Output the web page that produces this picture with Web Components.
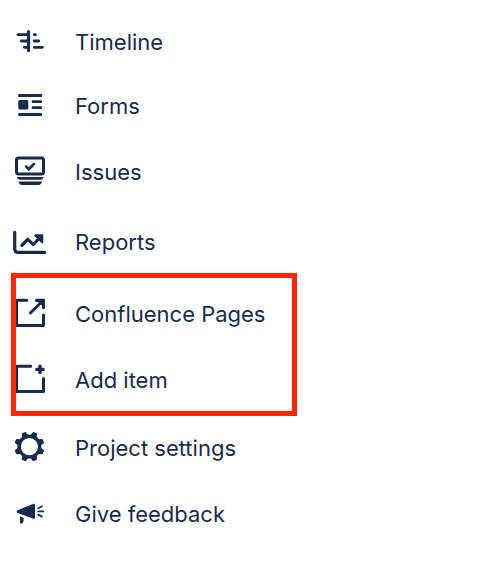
<!DOCTYPE html>
<html lang="en">
<head>
  <meta charset="utf-8">
  <meta name="viewport" content="width=device-width, initial-scale=1">
  <title>Project navigation</title>
  <style>
    body {
      margin: 0;
      background: #fff;
      color: #172b4d;
      font-family: Inter, "Liberation Sans", sans-serif;
      font-size: 22px;
    }
  </style>
</head>
<body>
  <project-nav></project-nav>

  <script>
    const icons = {
      timeline: `
        <g class="line" stroke-width="2.8">
          <path stroke-width="3.2" d="M16.5 7.5v19"/>
          <path d="M6 10.7h10M9.3 17H16M12.3 23.3H16"/>
          <path d="M22.3 10.7h1.2M22.3 17h4.5M22.3 23.3h8.1"/>
        </g>`,
      forms: `
        <rect x="6.3" y="6" width="23.7" height="3" rx=".6"/>
        <rect x="6.3" y="25" width="23.7" height="3" rx=".6"/>
        <rect x="6.3" y="12" width="10" height="9.6" rx="1.5"/>
        <rect x="19.7" y="12.2" width="10.3" height="2.8" rx="1"/>
        <rect x="19.7" y="18.2" width="10.3" height="2.8" rx="1"/>`,
      issues: `
        <rect class="line" x="4.5" y="4" width="27" height="16" rx="2" stroke-width="3"/>
        <path class="line" stroke-width="2.8" d="M14.2 12.6l2.6 2.7 5.1-5.2"/>
        <path d="M5 23h26.6q-.4 2.8-2.6 2.8H7.6Q5.4 25.8 5 23z"/>
        <path d="M6.6 27.6H30q-.6 3.4-3.4 3.4H10q-2.8 0-3.4-3.4z"/>`,
      reports: `
        <path class="line" stroke-width="3.2" d="M2.7 8.3V25q0 3.4 3.4 3.4h26.6"/>
        <path class="line" stroke-width="3.2" d="M9.9 21.4l5.8-6.1 5.6 5.2 7.2-7.5"/>
        <path d="M23.3 10.3h6.9q1.1 0 1.1 1.1v6.9q0 1.500-1.500 1l-7.500-7.400q-.5-1.600 1-1.600z"/>`,
      external: `
        <path class="line" stroke-width="3" d="M14.8 4.3H4.5v25.2h27V19"/>
        <path class="line" stroke-width="3" d="M18.4 17L30 5.5"/>
        <path d="M24 2.8h8q1 0 1 1V12q-1.5 2.4-3 0V9.7L26.2 6H24q-2-1.6 0-3.2z"/>`,
      add: `
        <path class="line" stroke-width="3" d="M18.7 4.3H4.5v25.3h27V16.4"/>
        <path class="line" stroke-width="3.4" d="M28 4.2v6.4M24.8 7.4h6.4"/>`,
      settings: `
        <circle class="line" cx="17.4" cy="16.6" r="10.3" stroke-width="3.4"/>
        ${[22.5, 67.5, 112.5, 157.5, 202.5, 247.5, 292.5, 337.5].map(angle => `
          <path transform="rotate(${angle} 17.4 16.6)" d="M14 6.3l.9-3.600q.3-1.200 1.300-1.200h2.400q1 0 1.300 1.200l.9 3.600z"/>`).join("")}`,
      feedback: `
        <path d="M5.5 14.2l16-6.4q1.5-.4 1.5 1v13q0 1.4-1.5 1l-16-5.900q-1.800-1.300 0-2.700z"/>
        <path d="M8 20.600l3.600 1.200v2.800q0 2.700-2.400 3.100Q8 27.800 8 26.600z"/>
        <path class="line" stroke-width="1.800" d="M26.200 12.200l3.700-2M26.200 15.400h5M26.200 18.600l3.700 2"/>`
    };

    class NavItem extends HTMLElement {
      constructor() {
        super();
        this.attachShadow({ mode: "open" });
      }
      connectedCallback() {
        this.shadowRoot.innerHTML = `
          <style>
            :host {
              display: block;
            }
            a {
              display: flex;
              align-items: center;
              gap: 27px;
              height: 48px;
              color: inherit;
              text-decoration: none;
              white-space: nowrap;
            }
            svg {
              flex: none;
              width: 36px;
              height: 36px;
              fill: currentColor;
            }
            .line {
              fill: none;
              stroke: currentColor;
              stroke-linecap: round;
              stroke-linejoin: round;
            }
          </style>
          <a href="#${this.getAttribute("icon")}">
            <svg viewBox="0 0 36 36" aria-hidden="true">${icons[this.getAttribute("icon")]}</svg>
            <span><slot></slot></span>
          </a>
        `;
      }
    }
    customElements.define("nav-item", NavItem);

    class NavGroup extends HTMLElement {
      constructor() {
        super();
        this.attachShadow({ mode: "open" });
        this.shadowRoot.innerHTML = `
          <style>
            :host {
              display: flex;
              flex-direction: column;
              gap: 18px;
              width: fit-content;
            }
            :host([spacing="tight"]) {
              gap: 16px;
            }
            :host([spacing="loose"]) {
              gap: 22px;
            }
            :host([highlight]) {
              position: relative;
              margin: 6px 0 2px;
              padding-right: 32px;
            }
            /* red frame sits on top of the icons */
            :host([highlight])::after {
              content: "";
              position: absolute;
              inset: -17px 0 -12px -1px;
              border: 5px solid #ff2600;
              pointer-events: none;
            }
          </style>
          <slot></slot>
        `;
      }
    }
    customElements.define("nav-group", NavGroup);

    class ProjectNav extends HTMLElement {
      constructor() {
        super();
        this.attachShadow({ mode: "open" });
        this.shadowRoot.innerHTML = `
          <style>
            :host {
              display: block;
            }
            nav {
              display: flex;
              flex-direction: column;
              gap: 18px;
              padding: 18px 12px 40px;
            }
          </style>
          <nav aria-label="Project">
            <nav-group spacing="tight">
              <nav-item icon="timeline">Timeline</nav-item>
              <nav-item icon="forms">Forms</nav-item>
            </nav-group>
            <nav-group spacing="loose">
              <nav-item icon="issues">Issues</nav-item>
              <nav-item icon="reports">Reports</nav-item>
            </nav-group>
            <nav-group highlight>
              <nav-item icon="external">Confluence Pages</nav-item>
              <nav-item icon="add">Add item</nav-item>
            </nav-group>
            <nav-group>
              <nav-item icon="settings">Project settings</nav-item>
              <nav-item icon="feedback">Give feedback</nav-item>
            </nav-group>
          </nav>
        `;
      }
    }
    customElements.define("project-nav", ProjectNav);
  </script>
</body>
</html>
